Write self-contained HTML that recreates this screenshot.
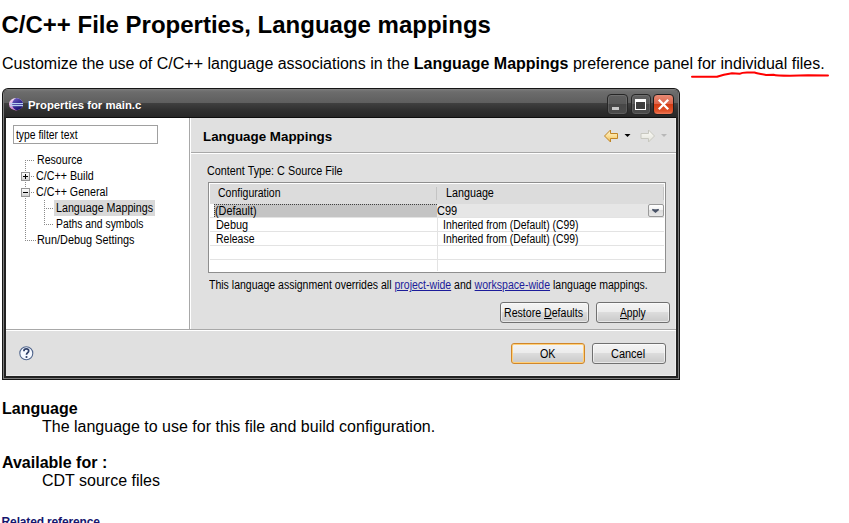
<!DOCTYPE html>
<html><head><meta charset="utf-8">
<style>
*{box-sizing:border-box;margin:0;padding:0}
html,body{width:849px;height:523px;overflow:hidden;background:#fff}
body{position:relative;font-family:"Liberation Sans",sans-serif;color:#000}
.a{position:absolute;white-space:pre;line-height:1}
.r{position:absolute}
.p{font-size:16px}
.u{font-size:12px;transform-origin:0 0}
.lk{color:#1c1c9a;text-decoration:underline}
.btn{position:absolute;height:21px;border:1px solid #707070;border-radius:3px;background:linear-gradient(#f4f4f4,#ececec 45%,#dcdcdc 50%,#c9c9c9);box-shadow:inset 0 0 0 1px rgba(255,255,255,.55)}
.wb{position:absolute;top:94px;height:21px;border:1px solid #262626;border-radius:4px;background:linear-gradient(#606060,#585858 45%,#474747 50%,#4c4c4c);box-shadow:inset 0 0 0 1px rgba(255,255,255,.10)}
.box{position:absolute;width:9px;height:9px;border:1px solid #959595;background:linear-gradient(#fdfdfd,#e6e6e6 60%,#cfcfcf)}
</style></head>
<body>
<div class="a" style="left:1.5px;top:13px;font-size:24px;font-weight:bold">C/C++ File Properties, Language mappings</div>
<div class="a p" style="left:2px;top:56px">Customize the use of C/C++ language associations in the <b>Language Mappings</b> preference panel for individual files.</div>
<svg class="r" style="left:0;top:0" width="849" height="90"><path d="M692 76.8 L717 76.8 C720 75.6 724 74.2 732 73.2 L739.5 73.8 C741 73 743 72.6 747 72.5 L754.5 72.5 C756 73 758 73.6 766 74.9 L773.5 74.8 C775 75.3 777 75.7 790 75.8 L808 75.3 L828 75.4" fill="none" stroke="#f00" stroke-width="2" stroke-linecap="round" stroke-linejoin="round"/></svg>

<div class="r" style="left:2px;top:88px;width:678px;height:292px;background:#161616;border-radius:6px 6px 0 0"></div>
<div class="r" style="left:3px;top:89px;width:676px;height:290px;background:#7c7c7c;border-radius:5px 5px 0 0"></div>
<div class="r" style="left:4px;top:90px;width:674px;height:288px;background:#222;border-radius:4px 4px 0 0"></div>
<div class="r" style="left:4px;top:90px;width:674px;height:27px;border-radius:4px 4px 0 0;background:linear-gradient(#767676 0,#6c6c6c 2px,#5e5e5e 13px,#404040 13px,#303030 20px,#272727 27px)"></div>
<div class="r" style="left:6px;top:117px;width:670px;height:1px;background:#0e0e0e"></div>
<svg class="r" style="left:9px;top:98px" width="14" height="13" viewBox="0 0 14 13">
 <defs><linearGradient id="eb" x1="0" y1="0" x2="0.6" y2="1"><stop offset="0" stop-color="#7c6cc8"/><stop offset="0.5" stop-color="#3a2e98"/><stop offset="1" stop-color="#140c6a"/></linearGradient>
 <linearGradient id="ep" x1="0" y1="0" x2="0" y2="1"><stop offset="0" stop-color="#f4e0f4"/><stop offset="1" stop-color="#c878c8"/></linearGradient>
 <clipPath id="ec"><ellipse cx="7" cy="6.2" rx="7" ry="6.2"/></clipPath></defs>
 <g clip-path="url(#ec)"><rect x="0" y="0" width="14" height="13" fill="url(#ep)"/><ellipse cx="9.6" cy="6.2" rx="6.4" ry="6.6" fill="url(#eb)"/></g>
 <rect x="1" y="5" width="13" height="1.2" fill="#b8d0f0"/><rect x="1" y="7" width="13" height="1.2" fill="#b8d0f0"/>
</svg>
<div class="a" style="left:28px;top:100px;font-size:11.5px;font-weight:bold;color:#fff;transform-origin:0 0;transform:scaleX(0.985)">Properties for main.c</div>
<div class="wb" style="left:607px;width:21px"></div>
<div class="r" style="left:612px;top:107px;width:7px;height:3px;background:#c8c8c8"></div>
<div class="wb" style="left:631px;width:20px"></div>
<div class="r" style="left:635px;top:99px;width:11px;height:11px;border:1px solid #fff;border-top-width:3px;background:#3e3e3e"></div>
<div class="r" style="left:653px;top:94px;width:21px;height:21px;border:1px solid #1e1e1e;border-radius:4px;background:linear-gradient(#e88a74,#dc6248 50%,#d43c14 50%,#e0542c 85%,#ee7a5a)"></div>
<svg class="r" style="left:654px;top:95px" width="19" height="19"><path d="M4.8 4.8 L14.2 14.2 M14.2 4.8 L4.8 14.2" stroke="#fff" stroke-width="2.3"/></svg>

<div class="r" style="left:6px;top:118px;width:670px;height:258px;background:#e0e0e0"></div>
<div class="r" style="left:675px;top:118px;width:1px;height:258px;background:#ececec"></div>
<div class="r" style="left:6px;top:375px;width:670px;height:1px;background:#ececec"></div>
<div class="r" style="left:6px;top:118px;width:183px;height:211px;background:#fff"></div>
<div class="r" style="left:189px;top:118px;width:1px;height:211px;background:#a8a8a8"></div>
<div class="r" style="left:190px;top:118px;width:1px;height:211px;background:#fff"></div>
<div class="r" style="left:6px;top:329px;width:670px;height:1px;background:#a8a8a8"></div>
<div class="r" style="left:6px;top:330px;width:670px;height:1px;background:#fff"></div>
<div class="r" style="left:13px;top:125px;width:145px;height:19px;border:1px solid #a0a0a0;background:#fff"></div>

<svg class="r" style="left:0;top:0" width="200" height="330"><g fill="#8a8a8a"><rect x="25" y="160" width="1" height="1"/><rect x="25" y="162" width="1" height="1"/><rect x="25" y="164" width="1" height="1"/><rect x="25" y="166" width="1" height="1"/><rect x="25" y="168" width="1" height="1"/><rect x="25" y="170" width="1" height="1"/><rect x="27" y="160" width="1" height="1"/><rect x="29" y="160" width="1" height="1"/><rect x="31" y="160" width="1" height="1"/><rect x="33" y="160" width="1" height="1"/><rect x="25" y="182" width="1" height="1"/><rect x="25" y="184" width="1" height="1"/><rect x="25" y="186" width="1" height="1"/><rect x="31" y="176" width="1" height="1"/><rect x="33" y="176" width="1" height="1"/><rect x="31" y="192" width="1" height="1"/><rect x="33" y="192" width="1" height="1"/><rect x="25" y="198" width="1" height="1"/><rect x="25" y="200" width="1" height="1"/><rect x="25" y="202" width="1" height="1"/><rect x="25" y="204" width="1" height="1"/><rect x="25" y="206" width="1" height="1"/><rect x="25" y="208" width="1" height="1"/><rect x="25" y="210" width="1" height="1"/><rect x="25" y="212" width="1" height="1"/><rect x="25" y="214" width="1" height="1"/><rect x="25" y="216" width="1" height="1"/><rect x="25" y="218" width="1" height="1"/><rect x="25" y="220" width="1" height="1"/><rect x="25" y="222" width="1" height="1"/><rect x="25" y="224" width="1" height="1"/><rect x="25" y="226" width="1" height="1"/><rect x="25" y="228" width="1" height="1"/><rect x="25" y="230" width="1" height="1"/><rect x="25" y="232" width="1" height="1"/><rect x="25" y="234" width="1" height="1"/><rect x="25" y="236" width="1" height="1"/><rect x="25" y="238" width="1" height="1"/><rect x="25" y="240" width="1" height="1"/><rect x="27" y="240" width="1" height="1"/><rect x="29" y="240" width="1" height="1"/><rect x="31" y="240" width="1" height="1"/><rect x="33" y="240" width="1" height="1"/><rect x="35" y="240" width="1" height="1"/><rect x="44" y="200" width="1" height="1"/><rect x="44" y="202" width="1" height="1"/><rect x="44" y="204" width="1" height="1"/><rect x="44" y="206" width="1" height="1"/><rect x="44" y="208" width="1" height="1"/><rect x="44" y="210" width="1" height="1"/><rect x="44" y="212" width="1" height="1"/><rect x="44" y="214" width="1" height="1"/><rect x="44" y="216" width="1" height="1"/><rect x="44" y="218" width="1" height="1"/><rect x="44" y="220" width="1" height="1"/><rect x="44" y="222" width="1" height="1"/><rect x="44" y="224" width="1" height="1"/><rect x="46" y="208" width="1" height="1"/><rect x="48" y="208" width="1" height="1"/><rect x="50" y="208" width="1" height="1"/><rect x="52" y="208" width="1" height="1"/><rect x="46" y="224" width="1" height="1"/><rect x="48" y="224" width="1" height="1"/><rect x="50" y="224" width="1" height="1"/><rect x="52" y="224" width="1" height="1"/></g></svg>
<div class="box" style="left:21px;top:172px"></div>
<div class="r" style="left:23px;top:176px;width:5px;height:1px;background:#000"></div>
<div class="r" style="left:25px;top:174px;width:1px;height:5px;background:#000"></div>
<div class="box" style="left:21px;top:188px"></div>
<div class="r" style="left:23px;top:192px;width:5px;height:1px;background:#000"></div>
<div class="r" style="left:54px;top:200px;width:101px;height:16px;background:#d9d9d9"></div>

<div class="a" style="left:202.5px;top:130px;font-size:13px;font-weight:bold;transform-origin:0 0;transform:scaleX(1.028)">Language Mappings</div>
<div class="r" style="left:191px;top:152px;width:485px;height:1px;background:#a8a8a8"></div>
<div class="r" style="left:191px;top:153px;width:485px;height:1px;background:#fff"></div>

<div class="r" style="left:208px;top:182px;width:458px;height:91px;border:1px solid #8e8e8e;background:#fff"></div>
<div class="r" style="left:210px;top:184px;width:454px;height:20px;background:#dcdcdc"></div>
<div class="r" style="left:436px;top:187px;width:1px;height:13px;background:#c4c4c4"></div>
<div class="r" style="left:663px;top:187px;width:1px;height:13px;background:#c4c4c4"></div>
<div class="r" style="left:214px;top:204px;width:223px;height:13px;background:#c4c4c4;border:1px dotted #404040;border-right:none;border-bottom:none"></div>
<div class="r" style="left:437px;top:204px;width:227px;height:13px;background:#e6e6e6"></div>
<div class="r" style="left:648px;top:204px;width:16px;height:13px;border:1px solid #9a9a9a;border-radius:2px;background:linear-gradient(#fff,#f0f0f0 50%,#dcdcdc 50%,#e8e8e8)"></div>
<svg class="r" style="left:651px;top:208px" width="10" height="6"><path d="M1 1.2 L4.5 4.2 L8 1.2 Z" fill="#4a5468"/><path d="M1.4 1.3 L4.5 3.9 L7.6 1.3" fill="none" stroke="#4a5468" stroke-width="1.6"/></svg>
<div class="r" style="left:210px;top:217px;width:454px;height:1px;background:#e3e3e3"></div>
<div class="r" style="left:210px;top:231px;width:454px;height:1px;background:#e3e3e3"></div>
<div class="r" style="left:210px;top:245px;width:454px;height:1px;background:#e3e3e3"></div>
<div class="r" style="left:210px;top:259px;width:454px;height:1px;background:#e3e3e3"></div>
<div class="r" style="left:437px;top:218px;width:1px;height:53px;background:#e3e3e3"></div>

<div class="btn" style="left:500px;top:302px;width:89px"></div>
<div class="btn" style="left:596px;top:302px;width:74px"></div>
<div class="btn" style="left:511px;top:343px;width:74px;border-color:#d0862a;box-shadow:inset 0 0 0 1px #ffd07a"></div>
<div class="btn" style="left:592px;top:343px;width:74px"></div>

<svg class="r" style="left:18px;top:345px" width="17" height="17"><circle cx="8.3" cy="8.3" r="6.5" fill="#f6f9ff" stroke="#50658c" stroke-width="1.1"/><path d="M5.9 6.2 C5.9 4.6 7 3.9 8.3 3.9 C9.7 3.9 10.7 4.7 10.7 5.9 C10.7 7.6 8.6 7.8 8.5 9.8" fill="none" stroke="#2e3f68" stroke-width="1.7"/><circle cx="8.5" cy="12" r="1.05" fill="#2e3f68"/></svg>

<svg class="r" style="left:600px;top:126px" width="72" height="20">
 <defs><linearGradient id="ag" x1="0" y1="0" x2="0" y2="1"><stop offset="0" stop-color="#fff6d0"/><stop offset="0.5" stop-color="#fbdf98"/><stop offset="1" stop-color="#eeb850"/></linearGradient><linearGradient id="fg" x1="0" y1="0" x2="0" y2="1"><stop offset="0" stop-color="#fcfcf8"/><stop offset="1" stop-color="#e2e2da"/></linearGradient></defs><path d="M4.5 10 L10.5 4 L10.5 7.5 L17.5 7.5 L17.5 12.5 L10.5 12.5 L10.5 16 Z" fill="url(#ag)" stroke="#c08424" stroke-width="1"/>
 <path d="M24.5 8 L30.5 8 L27.5 11 Z" fill="#000"/>
 <path d="M54.5 10 L48.5 4 L48.5 7.5 L41 7.5 L41 12.5 L48.5 12.5 L48.5 16 Z" fill="url(#fg)" stroke="#c8c8c0" stroke-width="1"/>
 <path d="M61 8 L67 8 L64 11 Z" fill="#b8b8b8"/>
</svg>

<div class="a u" style="left:15.8px;top:129px;transform:scaleX(0.862)">type filter text</div>
<div class="a u" style="left:36.7px;top:154px;transform:scaleX(0.884)">Resource</div>
<div class="a u" style="left:35.9px;top:170px;transform:scaleX(0.892)">C/C++ Build</div>
<div class="a u" style="left:35.9px;top:186px;transform:scaleX(0.89)">C/C++ General</div>
<div class="a u" style="left:55.9px;top:202px;transform:scaleX(0.892)">Language Mappings</div>
<div class="a u" style="left:55.9px;top:218px;transform:scaleX(0.862)">Paths and symbols</div>
<div class="a u" style="left:36.8px;top:234px;transform:scaleX(0.908)">Run/Debug Settings</div>
<div class="a u" style="left:206.9px;top:165px;transform:scaleX(0.901)">Content Type: C Source File</div>
<div class="a u" style="left:218.0px;top:187px;transform:scaleX(0.876)">Configuration</div>
<div class="a u" style="left:445.5px;top:187px;transform:scaleX(0.896)">Language</div>
<div class="a u" style="left:215.0px;top:205px;transform:scaleX(0.905)">(Default)</div>
<div class="a u" style="left:436.6px;top:205px;transform:scaleX(0.919)">C99</div>
<div class="a u" style="left:215.5px;top:219px;transform:scaleX(0.906)">Debug</div>
<div class="a u" style="left:443.2px;top:219px;transform:scaleX(0.864)">Inherited from (Default) (C99)</div>
<div class="a u" style="left:215.5px;top:233px;transform:scaleX(0.874)">Release</div>
<div class="a u" style="left:443.2px;top:233px;transform:scaleX(0.864)">Inherited from (Default) (C99)</div>
<div class="a u" style="left:209.0px;top:279px;transform:scaleX(0.877)">This language assignment overrides all <span class="lk">project-wide</span> and <span class="lk">workspace-wide</span> language mappings.</div>
<div class="a u" style="left:504.3px;top:307px;transform:scaleX(0.883)">Restore <u>D</u>efaults</div>
<div class="a u" style="left:619.8px;top:307px;transform:scaleX(0.857)"><u>A</u>pply</div>
<div class="a u" style="left:539.7px;top:348px;transform:scaleX(0.894)">OK</div>
<div class="a u" style="left:610.6px;top:348px;transform:scaleX(0.914)">Cancel</div>

<div class="a p" style="left:2px;top:401px;font-weight:bold">Language</div>
<div class="a p" style="left:42px;top:419px">The language to use for this file and build configuration.</div>
<div class="a p" style="left:2px;top:455px;font-weight:bold">Available for :</div>
<div class="a p" style="left:42px;top:473px">CDT source files</div>
<div class="a" style="left:1.6px;top:515.5px;font-size:12px;font-weight:bold;color:#16166e;letter-spacing:-0.15px">Related reference</div>
</body></html>
